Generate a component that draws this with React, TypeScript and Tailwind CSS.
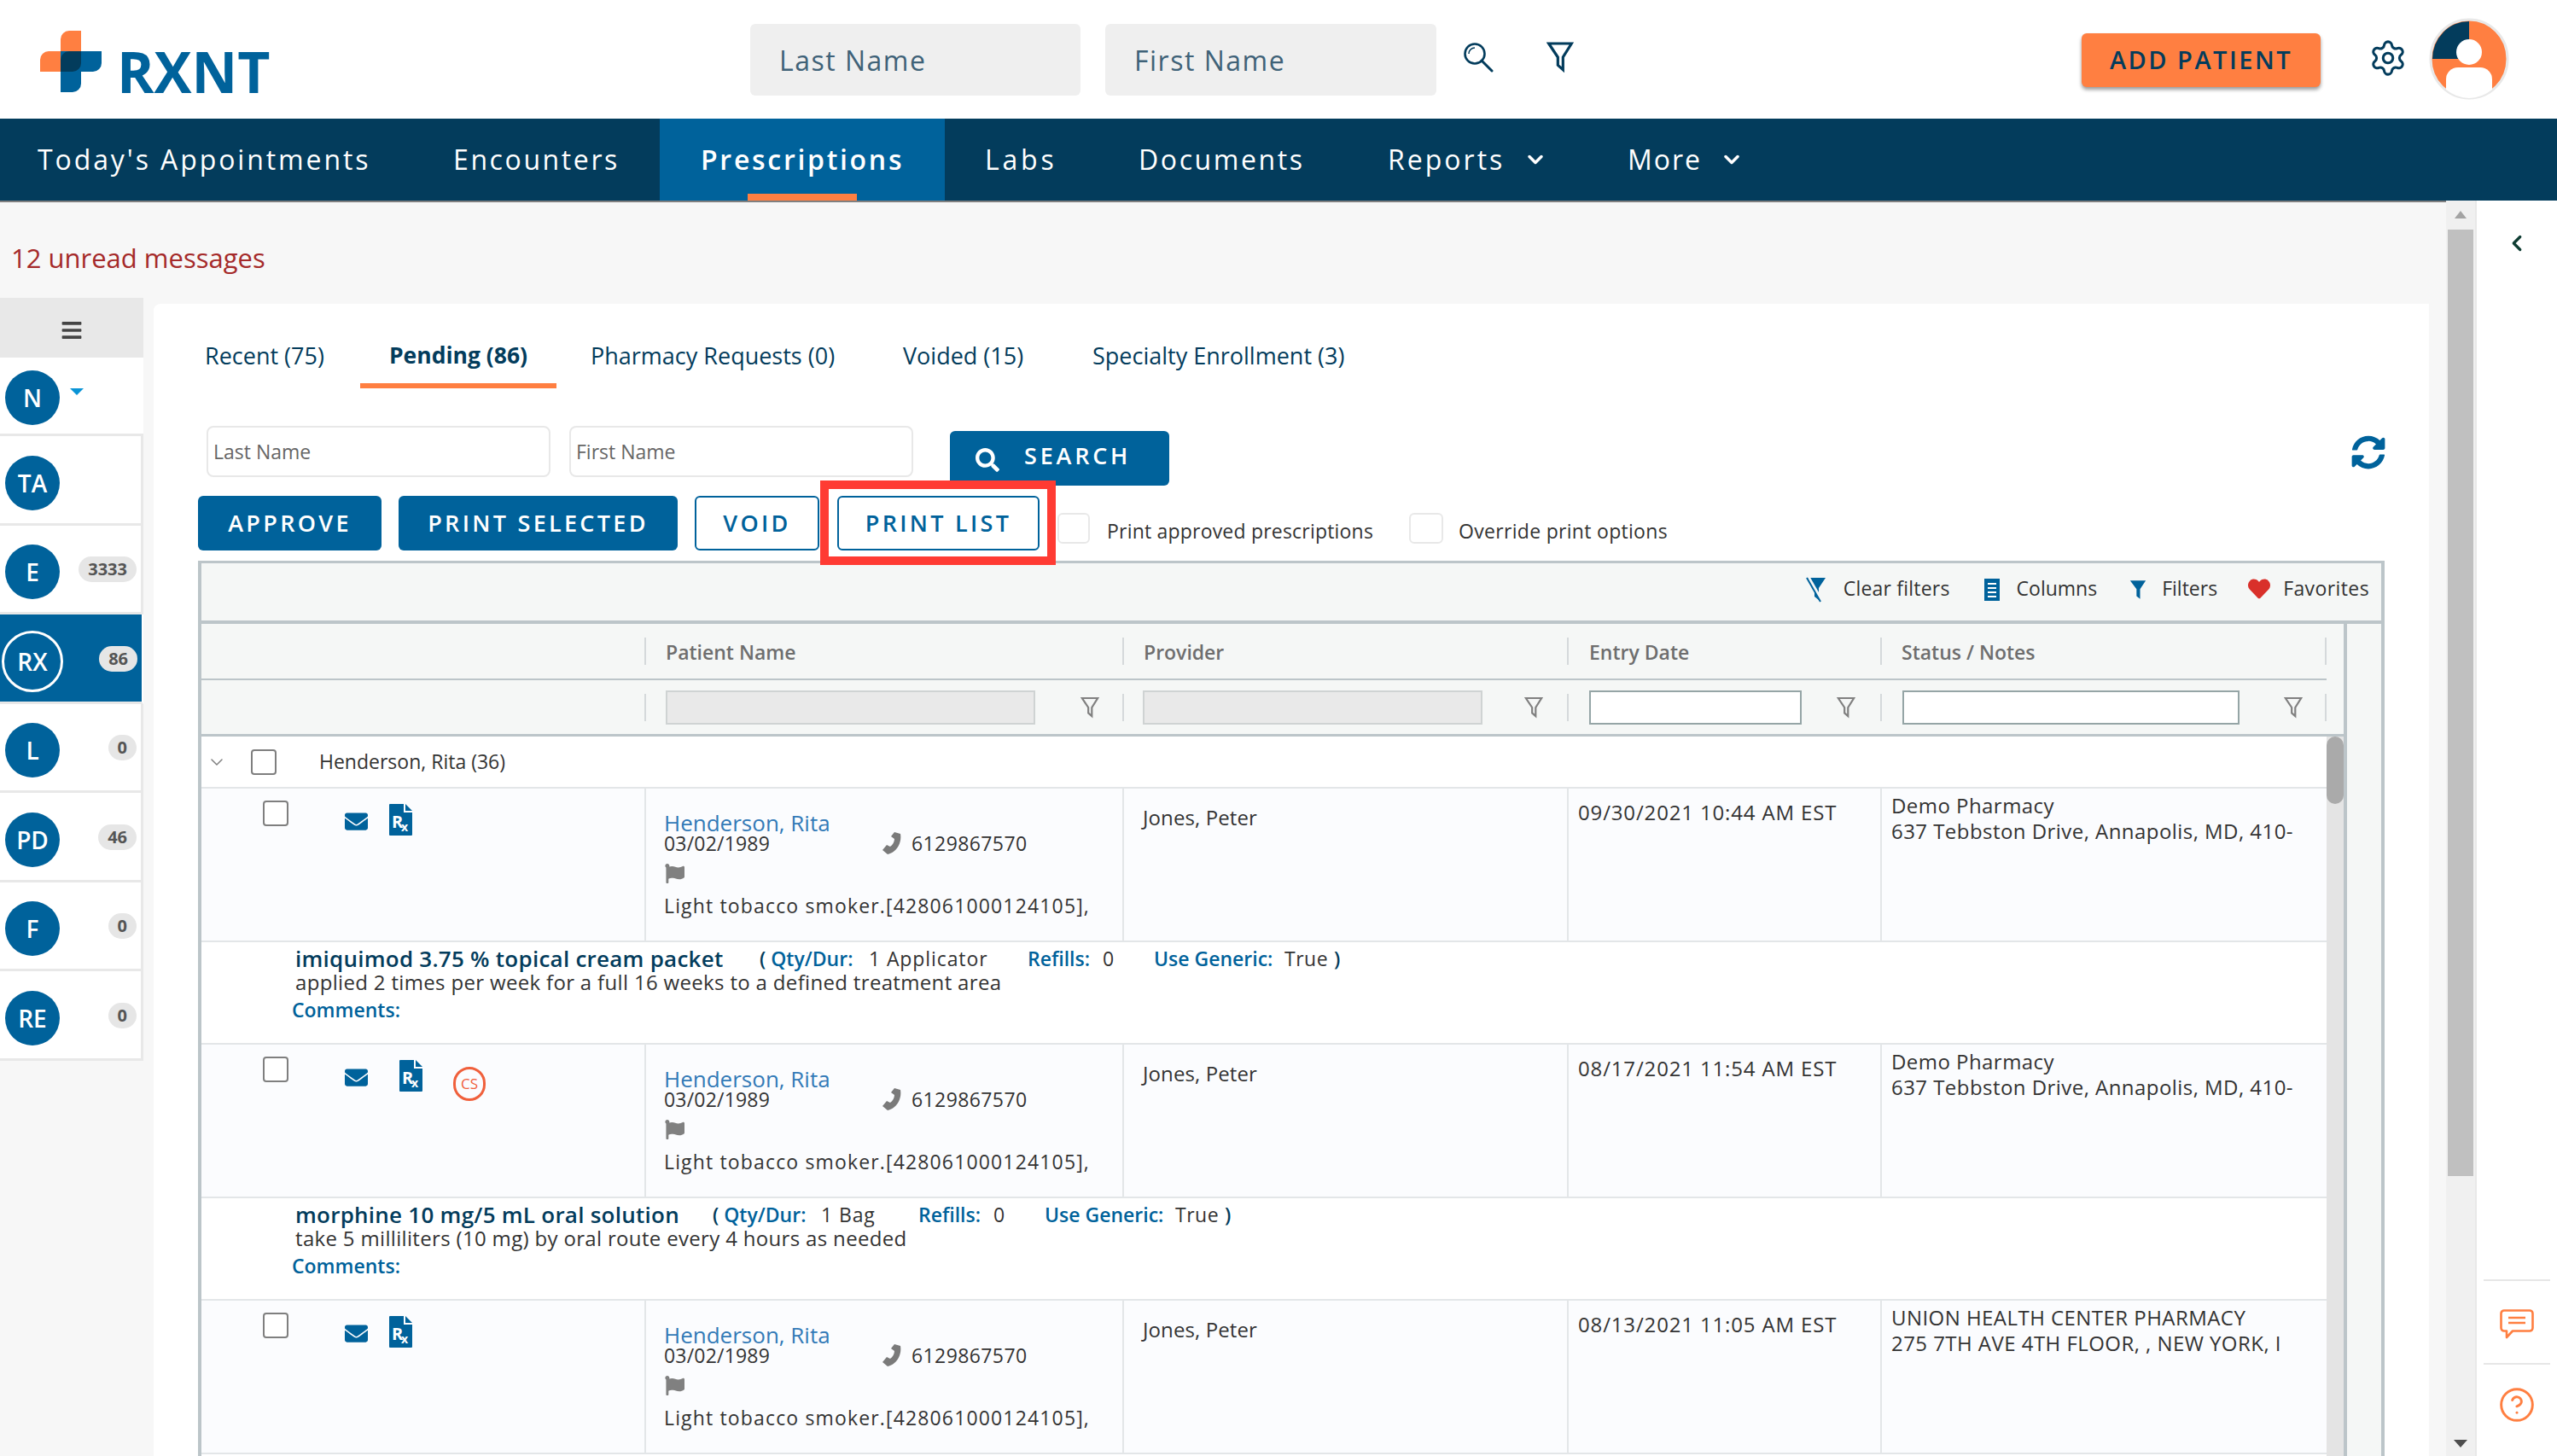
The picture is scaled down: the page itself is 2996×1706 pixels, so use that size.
import { Settings, CircleHelp, ChevronDown, ChevronLeft } from "lucide-react";
import { FaBars, FaEnvelope, FaFlag, FaHeart, FaSearch, FaSyncAlt } from "react-icons/fa";

const sideItems = [
  { label: "TA", badge: "" },
  { label: "E", badge: "3333" },
  { label: "RX", badge: "86", active: true },
  { label: "L", badge: "0" },
  { label: "PD", badge: "46" },
  { label: "F", badge: "0" },
  { label: "RE", badge: "0" },
];

const Funnel = ({ className }: { className: string }) => (
  <svg viewBox="0 0 24 28" className={className} fill="none" stroke="currentColor" strokeWidth="2.4">
    <path d="M2 2H22L14.5 14V25L10 21V14Z" />
  </svg>
);

const SolidFunnel = ({ className }: { className: string }) => (
  <svg viewBox="0 0 24 28" className={className} fill="currentColor">
    <path d="M1 1H23L15 13V27L10 23V13Z" />
  </svg>
);

const ClearFunnel = ({ className }: { className: string }) => (
  <svg viewBox="0 0 24 30" className={className}>
    <path d="M1 1H23L15 13V27L10 23V13Z" fill="#00629b" />
    <path d="M3 1L19 29" stroke="#f5f7f6" strokeWidth="4" />
    <path d="M1 1L17 29" stroke="#00629b" strokeWidth="2" />
  </svg>
);

const Phone = ({ className }: { className: string }) => (
  <svg viewBox="0 0 24 26" className={className} fill="currentColor">
    <path d="M15 0l7 2c2 11-5 22-15 24L1 21l5-6 4 2c3-2 5-6 5-9l-4-3z" />
  </svg>
);

const RxFile = ({ className }: { className: string }) => (
  <svg viewBox="0 0 27 37" className={className}>
    <path d="M1 0H17V10H27V36a1 1 0 0 1-1 1H1a1 1 0 0 1-1-1V1a1 1 0 0 1 1-1Z" fill="#00629b" />
    <path d="M19 0L27 8H19Z" fill="#00629b" />
    <text x="3" y="28" fontSize="20" fontWeight="700" fill="#fff" fontFamily="Open Sans, sans-serif">R</text>
    <text x="14" y="32" fontSize="14" fontWeight="700" fill="#fff" fontFamily="Open Sans, sans-serif">x</text>
  </svg>
);

const Sep = () => <div className="w-[2px] h-[32px] bg-[#d5d9db] shrink-0" />;

const Check = ({ className }: { className: string }) => (
  <div className={`border-2 border-[#7f7f7f] rounded-[4px] bg-white shrink-0 ${className}`} />
);

type RowProps = {
  icons: "plain" | "cs";
  date: string;
  pharmacy: string;
  address: string;
};

const PatientRow = ({ icons, date, pharmacy, address }: RowProps) => (
  <div className="h-[180px] border-b-2 border-[#e3e6e8] bg-[#fbfcfe] grid grid-cols-[519px_560px_521px_367px_523px]">
    <div className="flex items-start pl-[72px] pt-[14px]">
      <Check className="w-[30px] h-[30px]" />
      <FaEnvelope className="w-[29px] h-[27px] ml-[65px] mt-[11px] text-[#00629b]" />
      {icons === "cs" ? (
        <>
          <RxFile className="w-[27px] h-[37px] ml-[36px] mt-[4px]" />
          <div className="w-[38px] h-[40px] ml-[36px] mt-[12px] rounded-full border-[3px] border-[#f0603c] text-[#f0603c] text-[17px] flex items-center justify-center">
            CS
          </div>
        </>
      ) : (
        <RxFile className="w-[27px] h-[37px] ml-[24px] mt-[4px]" />
      )}
    </div>
    <div className="border-l-2 border-[#e3e6e8] pl-[21px] pt-[27px] text-[#333] text-[23px]">
      <div className="h-[26px] leading-[26px] text-[26px] text-[#337ab7]">Henderson, Rita</div>
      <div className="h-[22px] leading-[22px] flex items-center tracking-[0.2px]">
        <span className="w-[255px]">03/02/1989</span>
        <Phone className="w-[24px] h-[26px] text-[#7a7a7a]" />
        <span className="ml-[11px] tracking-[0.4px]">6129867570</span>
      </div>
      <FaFlag className="w-[25px] h-[23px] mt-[13px] text-[#808080]" />
      <div className="h-[28px] leading-[28px] mt-[12px] whitespace-nowrap tracking-[1.15px]">
        Light tobacco smoker.[428061000124105],
      </div>
    </div>
    <div className="border-l-2 border-[#e3e6e8] pl-[22px] pt-[20px] text-[#333] text-[24px] tracking-[0.1px] leading-[28px]">Jones, Peter</div>
    <div className="border-l-2 border-[#e3e6e8] pl-[11px] pt-[14px] text-[#333] text-[24px] tracking-[0.85px] leading-[28px]">{date}</div>
    <div className="border-l-2 border-[#e3e6e8] pl-[11px] pt-[5px] text-[#333] text-[24px] tracking-[0.45px] leading-[30px] whitespace-nowrap overflow-hidden">
      <div>{pharmacy}</div>
      <div>{address}</div>
    </div>
  </div>
);

type DetailProps = {
  drug: string;
  sig: string;
  nameW: string;
  qtyW: string;
  qty: string;
  qtyValW: string;
};

const DetailRow = ({ drug, sig, nameW, qtyW, qty, qtyValW }: DetailProps) => (
  <div className="h-[120px] border-b-2 border-[#e3e6e8] bg-white pl-[110px] pt-[4px] text-[23px] text-[#333]">
    <div className="h-[30px] leading-[30px] flex whitespace-nowrap">
      <span className={`text-[26px] tracking-[0.25px] font-semibold text-[#033c5c] ${nameW}`}>{drug}</span>
      <span className={`font-semibold text-[#00629b] ${qtyW}`}>
        <span className="text-[#033c5c]">( </span>Qty/Dur:
      </span>
      <span className={`tracking-[0.9px] ${qtyValW}`}>{qty}</span>
      <span className="w-[88px] font-semibold text-[#00629b]">Refills:</span>
      <span className="w-[60px]">0</span>
      <span className="w-[153px] font-semibold text-[#00629b]">Use Generic:</span>
      <span className="w-[58px] tracking-[0.5px]">True</span>
      <span className="font-semibold text-[#033c5c]">)</span>
    </div>
    <div className="h-[26px] leading-[26px] text-[24px] tracking-[0.33px]">{sig}</div>
    <div className="h-[28px] leading-[28px] mt-[5px] -ml-[4px] font-semibold text-[#00629b]">Comments:</div>
  </div>
);

export default function App() {
  return (
    <div className="w-[2996px] h-[1706px] overflow-hidden bg-white font-['Open_Sans',sans-serif] flex flex-col">
      <header className="h-[139px] shrink-0 flex items-center pl-[47px] pt-[3px]">
        <div className="w-[832px] flex items-end">
          <svg viewBox="0 0 72 72" className="w-[72px] h-[72px] mb-[-1px]">
            <path d="M34 0H48V48H0V34a10 10 0 0 1 10-10H24V10A10 10 0 0 1 34 0Z" fill="#ff7f41" />
            <path d="M24 24H72V38a10 10 0 0 1-10 10H48V62a10 10 0 0 1-10 10H24Z" fill="#00629b" />
            <path d="M34 24H48V38a10 10 0 0 1-10 10H24V34a10 10 0 0 1 10-10Z" fill="#033c5c" />
          </svg>
          <span className="ml-[18px] text-[66px] leading-[48px] font-bold text-[#00629b]">RXNT</span>
        </div>
        <div className="w-[387px] h-[84px] -mt-[3px] pt-[3px] bg-[#efefef] rounded-[6px] flex items-center pl-[34px] text-[32px] text-[#3f6278] tracking-[1.5px]">Last Name</div>
        <div className="w-[388px] h-[84px] -mt-[3px] pt-[3px] ml-[29px] bg-[#efefef] rounded-[6px] flex items-center pl-[34px] text-[32px] text-[#3f6278] tracking-[1.5px]">First Name</div>
        <svg viewBox="0 0 36 36" className="w-[36px] h-[36px] ml-[31px] -mt-[8px]" fill="none" stroke="#033c5c" strokeWidth="2.6">
          <circle cx="14" cy="14" r="11.5" />
          <path d="M22 22L34 34" strokeWidth="3" strokeLinecap="round" />
          <path d="M7 14A7 7 0 0 1 14 7" strokeWidth="1.6" />
        </svg>
        <Funnel className="w-[32px] h-[38px] ml-[62px] -mt-[8px] text-[#033c5c]" />
        <div className="w-[280px] h-[63px] ml-[595px] -mt-[2px] rounded-[6px] bg-[#ff7f41] shadow-[0_3px_4px_rgba(0,0,0,0.4)] flex items-center justify-center text-[29px] font-semibold text-[#033c5c] tracking-[2.5px]">ADD PATIENT</div>
        <Settings className="w-[46px] h-[46px] ml-[56px] -mt-[6px] text-[#033c5c]" strokeWidth={1.6} />
        <svg viewBox="0 0 94 96" className="w-[94px] h-[96px] ml-[25px] -mt-[4px]">
          <ellipse cx="47" cy="48" rx="45" ry="46" fill="#ff7f41" stroke="#e8e8e8" strokeWidth="3" />
          <path d="M47 4A43 44 0 0 0 4 48H47Z" fill="#033c5c" />
          <circle cx="47" cy="40" r="15" fill="#fff" />
          <path d="M20 84V72a14 14 0 0 1 14-14H60a14 14 0 0 1 14 14V84A45 46 0 0 1 47 94A45 46 0 0 1 20 84Z" fill="#fff" />
        </svg>
      </header>

      <nav className="h-[96px] shrink-0 bg-[#033c5c] flex -ml-[4px] text-[32px] text-white whitespace-nowrap">
        <div className="w-[487px] pl-[48px] flex items-center tracking-[2.9px]">Today's Appointments</div>
        <div className="w-[290px] pl-[48px] flex items-center tracking-[2.6px]">Encounters</div>
        <div className="w-[334px] pl-[48px] flex items-center bg-[#00629b] font-semibold tracking-[2.7px] relative">
          Prescriptions
          <div className="absolute left-[103px] bottom-0 w-[128px] h-[8px] bg-[#ff7f41]" />
        </div>
        <div className="w-[179px] pl-[47px] flex items-center tracking-[3.8px]">Labs</div>
        <div className="w-[292px] pl-[48px] flex items-center tracking-[2.6px]">Documents</div>
        <div className="w-[281px] pl-[48px] flex items-center tracking-[3px]">
          Reports
          <ChevronDown className="w-[28px] h-[28px] ml-[22px]" strokeWidth={3} />
        </div>
        <div className="pl-[48px] flex items-center tracking-[2px]">
          More
          <ChevronDown className="w-[28px] h-[28px] ml-[21px]" strokeWidth={3} />
        </div>
      </nav>

      <div className="flex-1 flex min-h-0">
        <main className="w-[2866px] bg-[#f7f7f7] border-t-2 border-[#808080] flex flex-col min-h-0">
          <div className="h-[112px] shrink-0 pl-[13px] pt-[47px] text-[31px] leading-[36px] text-[#a52a2a]">12 unread messages</div>
          <div className="flex flex-1 min-h-0">
            <aside className="w-[168px] shrink-0 bg-white self-start">
              <div className="h-[70px] pt-[5px] bg-[#e8e8e8] flex items-center justify-center">
                <FaBars className="w-[26px] h-[26px] text-[#444]" />
              </div>
              <div className="h-[92px] pt-[5px] flex items-center pl-[6px] border-b-[3px] border-[#e8e8e8]">
                <div className="w-[64px] h-[64px] rounded-full bg-[#00629b] text-white text-[28px] font-semibold flex items-center justify-center">N</div>
                <div className="ml-[12px] -mt-[14px] w-0 h-0 border-x-[8px] border-x-transparent border-t-[8px] border-t-[#0a94d6]" />
              </div>
              {sideItems.map((item) => (
                <div
                  key={item.label}
                  className={
                    item.active
                      ? "h-[104.5px] flex items-center pl-[2px] pt-[8px] bg-[#00629b] border-b-[3px] border-r-[2px] border-b-[#e8e8e8] border-r-white"
                      : "h-[104.5px] flex items-center pl-[6px] pt-[8px] border-b-[3px] border-r-[3px] border-[#e8e8e8]"
                  }
                >
                  <div
                    className={
                      item.active
                        ? "w-[72px] h-[72px] rounded-full border-[3px] border-white text-white text-[28px] font-semibold flex items-center justify-center"
                        : "w-[64px] h-[64px] rounded-full bg-[#00629b] text-white text-[28px] font-semibold flex items-center justify-center"
                    }
                  >
                    {item.label}
                  </div>
                  {item.badge && (
                    <div className="ml-auto mr-[5px] h-[30px] min-w-[32px] px-[11px] -mt-[6px] rounded-full bg-[#e6e6e6] text-[#555] text-[20px] font-bold flex items-center justify-center">
                      {item.badge}
                    </div>
                  )}
                </div>
              ))}
            </aside>

            <section className="w-[2666px] ml-[12px] mt-[7px] bg-white rounded-tl-[8px] flex flex-col min-h-0">
              <div className="h-[99px] shrink-0 flex text-[27px] text-[#033c5c] whitespace-nowrap">
                <div className="w-[242px] pl-[60px] pt-[41px]">Recent (75)</div>
                <div className="w-[230px] pt-[41px] text-center text-[26.5px] font-bold border-b-[6px] border-[#ff7f41]">Pending (86)</div>
                <div className="w-[372px] pl-[40px] pt-[41px]">Pharmacy Requests (0)</div>
                <div className="w-[222px] pl-[34px] pt-[41px]">Voided (15)</div>
                <div className="pl-[34px] pt-[41px]">Specialty Enrollment (3)</div>
              </div>

              <div className="h-[82px] shrink-0 mt-[44px] pl-[62px] flex items-start">
                <div className="w-[403px] h-[60px] pt-[1px] border-2 border-[#e8e8e8] rounded-[8px] flex items-center pl-[6px] text-[23px] text-[#666]">Last Name</div>
                <div className="w-[403px] h-[60px] pt-[1px] ml-[22px] border-2 border-[#e8e8e8] rounded-[8px] flex items-center pl-[6px] text-[23px] text-[#666]">First Name</div>
                <div className="w-[257px] h-[64px] ml-[43px] mt-[6px] bg-[#00629b] rounded-[6px] flex items-center pl-[30px] text-white text-[27px] font-semibold tracking-[3.8px]">
                  <FaSearch className="w-[28px] h-[28px] mt-[4px]" />
                  <span className="ml-[29px] -mt-[6px]">SEARCH</span>
                </div>
                <FaSyncAlt className="w-[40px] h-[40px] mt-[11px] ml-[1385px] text-[#00629b]" />
              </div>

              <div className="h-[76px] shrink-0 pl-[52px] flex items-start text-[27px] tracking-[3.3px] font-semibold">
                <div className="w-[215px] h-[64px] bg-[#00629b] rounded-[6px] text-white flex items-center justify-center">APPROVE</div>
                <div className="w-[327px] h-[64px] ml-[20px] bg-[#00629b] rounded-[6px] text-white flex items-center justify-center">PRINT SELECTED</div>
                <div className="w-[146px] h-[64px] ml-[20px] border-2 border-[#00629b] rounded-[6px] text-[#00629b] flex items-center justify-center">VOID</div>
                <div className="w-[237px] h-[64px] ml-[21px] border-2 border-[#00629b] rounded-[6px] text-[#00629b] flex items-center justify-center relative">
                  PRINT LIST
                  <div className="absolute -left-[22px] -top-[20px] w-[276px] h-[99px] border-[10px] border-[#ff3b33]" />
                </div>
                <div className="w-[38px] h-[36px] ml-[21px] mt-[20px] border-2 border-[#e8e8e8] rounded-[6px]" />
                <span className="ml-[20px] mt-[24px] h-[34px] leading-[34px] text-[23px] font-normal tracking-[0.2px] text-[#333]">Print approved prescriptions</span>
                <div className="w-[40px] h-[36px] ml-[42px] mt-[20px] border-2 border-[#e8e8e8] rounded-[6px]" />
                <span className="ml-[18px] mt-[24px] h-[34px] leading-[34px] text-[23px] font-normal tracking-[0.3px] text-[#333]">Override print options</span>
              </div>

              <div className="w-[2562px] ml-[52px] flex-1 min-h-0 flex flex-col border-x-4 border-t-[3px] border-[#bcc5c9] bg-[#f5f7f6] text-[23px] text-[#333]">
                <div className="h-[71px] pb-[9px] shrink-0 border-b-4 border-[#bcc5c9] flex items-center justify-end pr-[14px]">
                  <ClearFunnel className="w-[24px] h-[30px] mt-[4px] mr-[3px]" />
                  <span className="ml-[17px] tracking-[0.2px]">Clear filters</span>
                  <div className="w-[18px] h-[26px] ml-[40px] mt-[4px] bg-[#00629b] flex flex-col justify-center gap-[3px] px-[4px]">
                    <div className="h-[2px] bg-white" />
                    <div className="h-[2px] bg-white" />
                    <div className="h-[2px] bg-white" />
                    <div className="h-[2px] bg-white" />
                  </div>
                  <span className="ml-[20px]">Columns</span>
                  <SolidFunnel className="w-[20px] h-[28px] ml-[38px] mt-[4px] text-[#00629b]" />
                  <span className="ml-[18px]">Filters</span>
                  <FaHeart className="w-[26px] h-[26px] ml-[36px] mt-[2px] text-[#d9302a]" />
                  <span className="ml-[15px] tracking-[0.4px]">Favorites</span>
                </div>

                <div className="flex flex-1 min-h-0">
                  <div className="w-[2510px] shrink-0 flex flex-col min-h-0">
                    <div className="w-[2490px] h-[66px] shrink-0 border-b-2 border-[#bcc5c9] grid grid-cols-[519px_560px_521px_367px_523px] font-semibold text-[#6e6e6e]">
                      <div />
                      <div className="flex items-center">
                        <Sep />
                        <span className="ml-[23px] mt-[2px]">Patient Name</span>
                      </div>
                      <div className="flex items-center">
                        <Sep />
                        <span className="ml-[23px] mt-[2px]">Provider</span>
                      </div>
                      <div className="flex items-center">
                        <Sep />
                        <span className="ml-[24px] mt-[2px]">Entry Date</span>
                      </div>
                      <div className="flex items-center">
                        <Sep />
                        <span className="ml-[23px] mt-[2px]">Status / Notes</span>
                        <div className="ml-auto">
                          <Sep />
                        </div>
                      </div>
                    </div>
                    <div className="w-[2490px] h-[63px] shrink-0 grid grid-cols-[519px_560px_521px_367px_523px] text-[#808080]">
                      <div />
                      <div className="flex items-center">
                        <Sep />
                        <div className="w-[433px] h-[40px] ml-[23px] bg-[#e9e9e9] border-2 border-[#cfd3d3]" />
                        <Funnel className="w-[22px] h-[26px] ml-[53px]" />
                      </div>
                      <div className="flex items-center">
                        <Sep />
                        <div className="w-[398px] h-[40px] ml-[22px] bg-[#e9e9e9] border-2 border-[#cfd3d3]" />
                        <Funnel className="w-[22px] h-[26px] ml-[49px]" />
                      </div>
                      <div className="flex items-center">
                        <Sep />
                        <div className="w-[249px] h-[40px] ml-[24px] bg-white border-2 border-[#95a5a6]" />
                        <Funnel className="w-[22px] h-[26px] ml-[41px]" />
                      </div>
                      <div className="flex items-center">
                        <Sep />
                        <div className="w-[395px] h-[40px] ml-[24px] bg-white border-2 border-[#95a5a6]" />
                        <Funnel className="w-[22px] h-[26px] ml-[52px]" />
                        <div className="ml-auto">
                          <Sep />
                        </div>
                      </div>
                    </div>
                    <div className="flex flex-1 min-h-0 border-t-[3px] border-[#bcc5c9] bg-white">
                      <div className="w-[2490px] shrink-0 overflow-hidden">
                        <div className="h-[61px] border-b-2 border-[#e3e6e8] flex items-center">
                          <ChevronDown className="w-[24px] h-[24px] ml-[6px] text-[#808080]" strokeWidth={1.5} />
                          <Check className="w-[30px] h-[30px] ml-[28px]" />
                          <span className="ml-[50px]">Henderson, Rita (36)</span>
                        </div>
                        <PatientRow icons="plain" date="09/30/2021 10:44 AM EST" pharmacy="Demo Pharmacy" address="637 Tebbston Drive, Annapolis, MD, 410-" />
                        <DetailRow
                          drug="imiquimod 3.75 % topical cream packet"
                          sig="applied 2 times per week for a full 16 weeks to a defined treatment area"
                          nameW="w-[544px]"
                          qtyW="w-[128px]"
                          qty="1 Applicator"
                          qtyValW="w-[186px]"
                        />
                        <PatientRow icons="cs" date="08/17/2021 11:54 AM EST" pharmacy="Demo Pharmacy" address="637 Tebbston Drive, Annapolis, MD, 410-" />
                        <DetailRow
                          drug="morphine 10 mg/5 mL oral solution"
                          sig="take 5 milliliters (10 mg) by oral route every 4 hours as needed"
                          nameW="w-[489px]"
                          qtyW="w-[127px]"
                          qty="1 Bag"
                          qtyValW="w-[114px]"
                        />
                        <PatientRow icons="plain" date="08/13/2021 11:05 AM EST" pharmacy="UNION HEALTH CENTER PHARMACY" address="275 7TH AVE 4TH FLOOR, , NEW YORK, I" />
                      </div>
                      <div className="w-[20px] bg-[#e4e4e4]">
                        <div className="h-[79px] rounded-full bg-[#aaaaaa]" />
                      </div>
                    </div>
                  </div>
                  <div className="flex-1 border-l-4 border-[#bcc5c9]" />
                </div>
              </div>
            </section>
          </div>
        </main>

        <div className="w-[36px] shrink-0 bg-[#f0f0f0] flex flex-col items-center px-[2px] border-r-2 border-[#e8e8e8]">
          <div className="mt-[12px] w-0 h-0 border-x-[7px] border-x-transparent border-b-[9px] border-b-[#a3a3a3]" />
          <div className="w-[30px] h-[1109px] mt-[13px] bg-[#c0c0c0]" />
          <div className="mt-auto mb-[10px] w-0 h-0 border-x-[8px] border-x-transparent border-t-[9px] border-t-[#4d4d4d]" />
        </div>

        <div className="w-[94px] shrink-0 flex flex-col items-center bg-white">
          <ChevronLeft className="w-[30px] h-[30px] mt-[35px] text-[#0f3d33]" strokeWidth={2.6} />
          <div className="w-[78px] h-[2px] mt-[1199px] bg-[#e6e6e6]" />
          <div className="h-[96px] flex items-center justify-center">
            <svg viewBox="0 0 40 36" className="w-[40px] h-[36px] mt-[6px]" fill="none" stroke="#ff7f41" strokeWidth="2.6" strokeLinejoin="round">
              <path d="M5 1.5H35a3.5 3.5 0 0 1 3.5 3.5V22a3.5 3.5 0 0 1-3.5 3.5H15L8 33V25.5H5A3.5 3.5 0 0 1 1.5 22V5A3.5 3.5 0 0 1 5 1.5Z" />
              <path d="M10 10H30M10 16H30" />
            </svg>
          </div>
          <div className="w-[78px] h-[2px] bg-[#e6e6e6]" />
          <CircleHelp className="w-[44px] h-[44px] mt-[25px] text-[#ff7f41]" strokeWidth={1.6} />
        </div>
      </div>
    </div>
  );
}
